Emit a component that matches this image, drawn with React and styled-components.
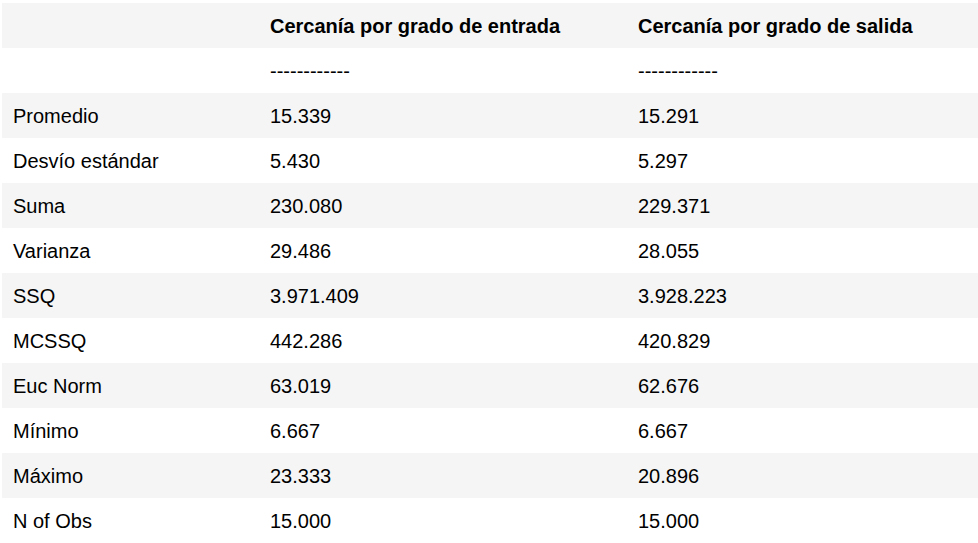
import React from "react";
import styled, { createGlobalStyle } from "styled-components";

const GlobalStyle = createGlobalStyle`
  html, body {
    margin: 0;
    padding: 0;
    background: #ffffff;
  }
  body {
    font-family: "Liberation Sans", Arial, sans-serif;
    color: #000000;
  }
`;

const stats = [
  ["Promedio", "15.339", "15.291"],
  ["Desvío estándar", "5.430", "5.297"],
  ["Suma", "230.080", "229.371"],
  ["Varianza", "29.486", "28.055"],
  ["SSQ", "3.971.409", "3.928.223"],
  ["MCSSQ", "442.286", "420.829"],
  ["Euc Norm", "63.019", "62.676"],
  ["Mínimo", "6.667", "6.667"],
  ["Máximo", "23.333", "20.896"],
  ["N of Obs", "15.000", "15.000"],
];

const App = () => {
  const rows = [
    { cells: ["", "Cercanía por grado de entrada", "Cercanía por grado de salida"], head: true },
    { cells: ["", "------------", "------------"] },
    ...stats.map((cells) => ({ cells })),
  ];
  return (
    <>
      <GlobalStyle />
      <Table>
        {rows.map((row, i) => (
          <Row key={i} $shaded={i % 2 === 0}>
            {row.cells.map((c, j) => (
              <Cell key={j} $bold={row.head}>
                {c}
              </Cell>
            ))}
          </Row>
        ))}
      </Table>
    </>
  );
};

const Table = styled.div`
  margin: 3px 0 0 2px;
  display: flex;
  flex-direction: column;
`;

const Row = styled.div`
  display: grid;
  grid-template-columns: 257px 368px 1fr;
  height: 45px;
  align-items: center;
  background: ${(p) => (p.$shaded ? "#f5f5f5" : "#ffffff")};
`;

const Cell = styled.div`
  padding: 2px 11px 0;
  font-size: 20px;
  font-weight: ${(p) => (p.$bold ? 700 : 400)};
  white-space: nowrap;
`;

export default App;
